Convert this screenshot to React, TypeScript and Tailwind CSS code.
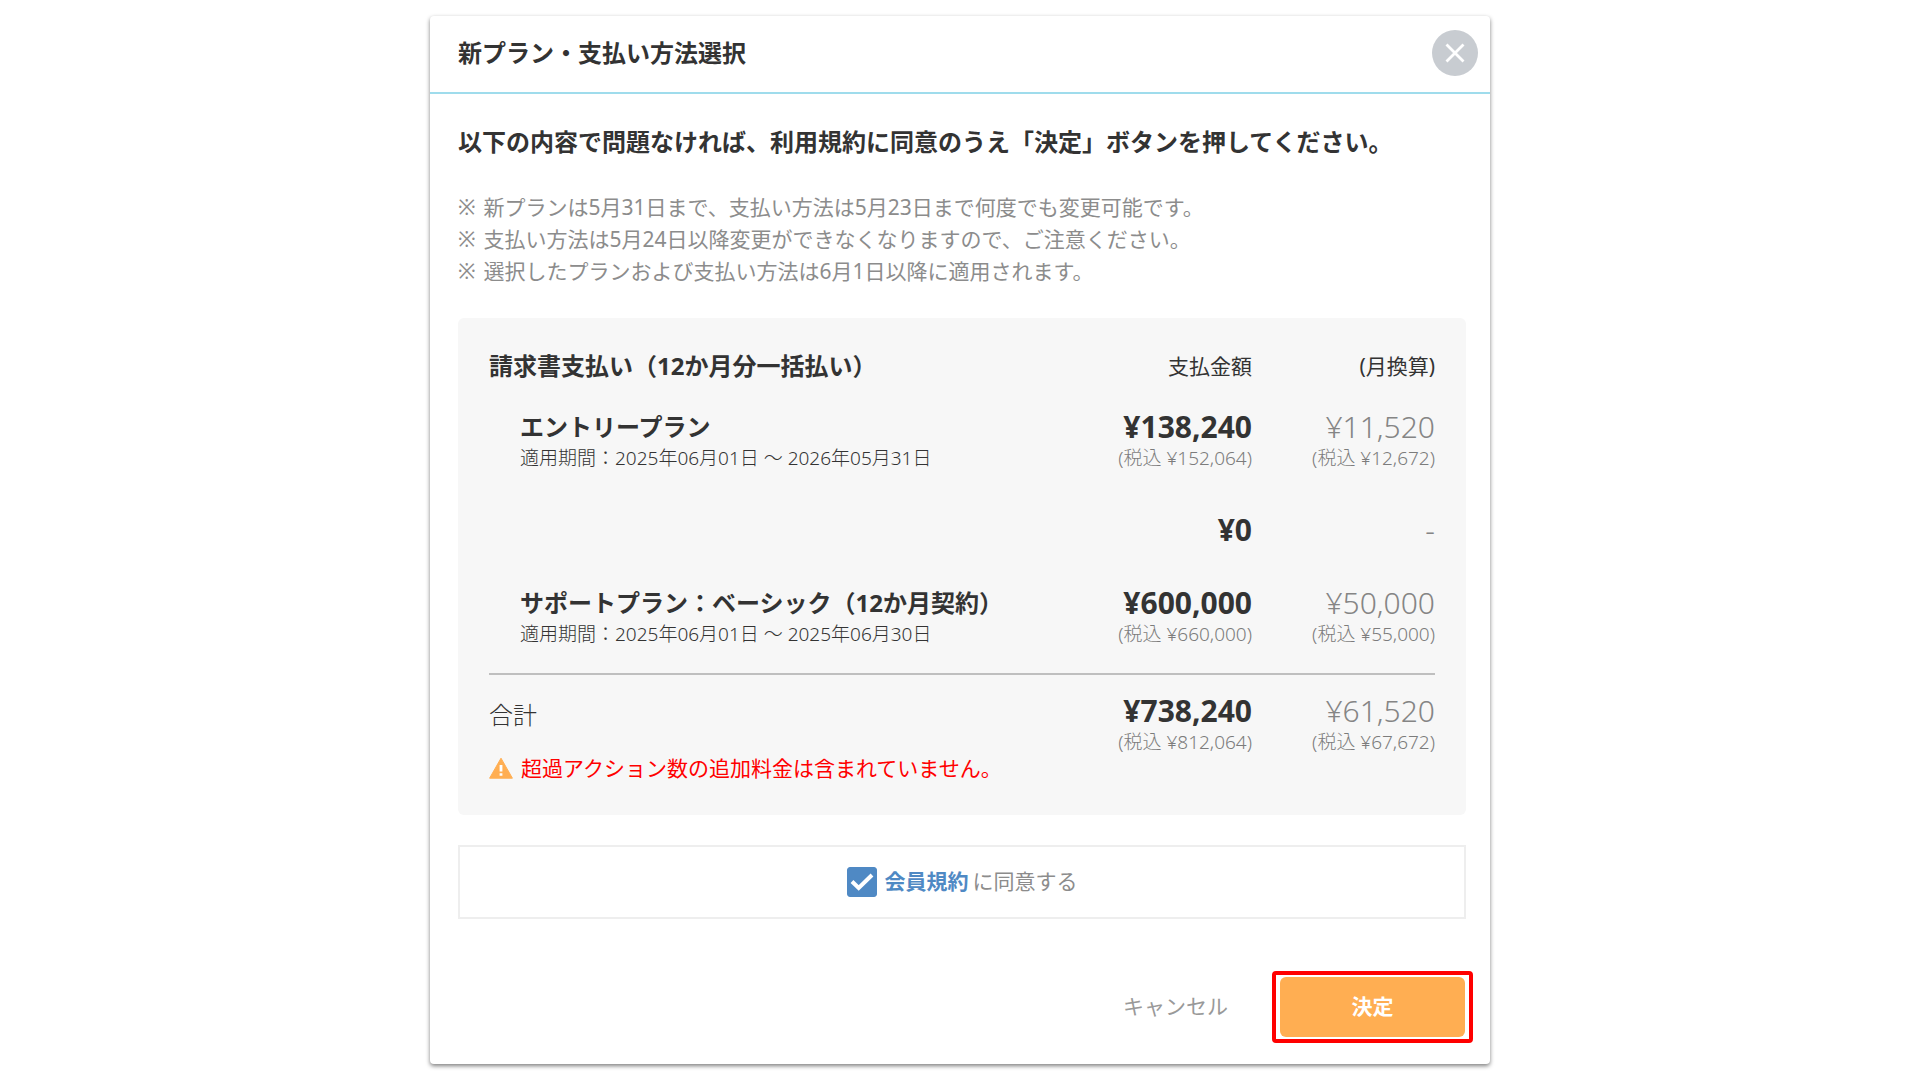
import { useState } from "react";

type PlanRow = {
  name?: string;
  period?: string;
  amount: string;
  amountTax?: string;
  monthly: string;
  monthlyTax?: string;
};

const notes = [
  "新プランは5月31日まで、支払い方法は5月23日まで何度でも変更可能です。",
  "支払い方法は5月24日以降変更ができなくなりますので、ご注意ください。",
  "選択したプランおよび支払い方法は6月1日以降に適用されます。",
];

const rows: PlanRow[] = [
  {
    name: "エントリープラン",
    period: "適用期間：2025年06月01日 〜 2026年05月31日",
    amount: "¥138,240",
    amountTax: "(税込 ¥152,064)",
    monthly: "¥11,520",
    monthlyTax: "(税込 ¥12,672)",
  },
  { amount: "¥0", monthly: "-" },
  {
    name: "サポートプラン：ベーシック（12か月契約）",
    period: "適用期間：2025年06月01日 〜 2025年06月30日",
    amount: "¥600,000",
    amountTax: "(税込 ¥660,000)",
    monthly: "¥50,000",
    monthlyTax: "(税込 ¥55,000)",
  },
];

function Price({ value, tax, strong }: { value: string; tax?: string; strong?: boolean }) {
  return (
    <>
      <div
        className={
          strong
            ? "text-[30px] leading-[32px] font-bold text-[#333]"
            : "text-[30px] leading-[32px] font-light text-[#858585]"
        }
      >
        {value}
      </div>
      {tax && <div className="text-[19px] leading-[30px] font-light text-[#7c7c7c]">{tax}</div>}
    </>
  );
}

function CloseIcon() {
  return (
    <svg viewBox="0 0 20 20" className="h-5 w-5" fill="none" stroke="currentColor" strokeWidth="2.8" aria-hidden="true">
      <path d="M1.5 1.5l17 17M18.5 1.5l-17 17" />
    </svg>
  );
}

function WarningIcon() {
  return (
    <svg viewBox="0 0 24 22" className="h-[22px] w-6 shrink-0" aria-hidden="true">
      <path d="M12 1.2L23.4 21.2H.6z" fill="#ffae52" stroke="#ffae52" strokeLinejoin="round" />
      <path d="M10.6 8h2.8v6.6h-2.8zM10.6 16.2h2.8v2.6h-2.8z" fill="#fff" />
    </svg>
  );
}

function PlanTable() {
  return (
    <table className="w-full border-collapse text-right">
      <thead>
        <tr className="leading-[36px]">
          <th className="text-left text-[24px] font-bold">請求書支払い（12か月分一括払い）</th>
          <th className="w-[180px] text-[21px] font-normal">支払金額</th>
          <th className="w-[183px] text-[21px] font-normal">(月換算)</th>
        </tr>
      </thead>
      <tbody className="before:block before:h-[27px]">
        {rows.map((row, i) => {
          const pad = i === rows.length - 1 ? "pb-6" : "pb-[41px]";
          return (
            <tr key={row.amount} className="align-top">
              <td className={`${pad} pl-[31px] text-left`}>
                <div className="text-[24px] leading-[32px] font-bold">{row.name}</div>
                <div className="text-[19px] leading-[30px] font-light">{row.period}</div>
              </td>
              <td className={pad}>
                <Price value={row.amount} tax={row.amountTax} strong />
              </td>
              <td className={pad}>
                <Price value={row.monthly} tax={row.monthlyTax} />
              </td>
            </tr>
          );
        })}
      </tbody>
      <tfoot>
        <tr className="border-t-2 border-[#bfbfbf] align-top">
          <th className="pt-6 text-left text-[24px] leading-[32px] font-light">合計</th>
          <td className="pt-5">
            <Price value="¥738,240" tax="(税込 ¥812,064)" strong />
          </td>
          <td className="pt-5">
            <Price value="¥61,520" tax="(税込 ¥67,672)" />
          </td>
        </tr>
      </tfoot>
    </table>
  );
}

export default function App() {
  const [agreed, setAgreed] = useState(true);

  return (
    <div className="min-h-screen bg-white py-4 font-['Noto_Sans','Noto_Sans_CJK_JP',sans-serif] text-[#333]">
      <main className="mx-auto w-full max-w-[1060px] rounded-sm bg-white shadow-[0_2px_4px_rgba(0,0,0,0.5)]">
        <header className="flex h-[78px] items-center justify-between border-b-2 border-[#9fdcec] pr-3 pb-0.5 pl-7">
          <h1 className="text-[24px] leading-[36px] font-bold">新プラン・支払い方法選択</h1>
          <button
            type="button"
            aria-label="閉じる"
            className="grid h-[46px] w-[46px] place-items-center rounded-full bg-[#c8ccd1] text-white"
          >
            <CloseIcon />
          </button>
        </header>

        <div className="pt-[30px] pr-6 pl-7">
          <p className="text-[24px] leading-[36px] font-bold">
            以下の内容で問題なければ、利用規約に同意のうえ「決定」ボタンを押してください。
          </p>
          <ul className="mt-[31px] text-[21px] leading-[32px] font-normal text-[#8c8c8c]">
            {notes.map((note) => (
              <li key={note} className="flex gap-2">
                <span>※</span>
                {note}
              </li>
            ))}
          </ul>

          <section className="mt-[31px] rounded-md bg-[#f7f7f7] px-[31px] pt-[30px] pb-[36px]">
            <PlanTable />
            <p className="flex items-center gap-2 text-[21px] leading-[22px] font-normal text-[#ff0000]">
              <WarningIcon />
              超過アクション数の追加料金は含まれていません。
            </p>
          </section>

          <div className="mt-[30px] flex h-[74px] items-center justify-center gap-2 border-2 border-[#eee] text-[21px]">
            <span className="grid h-[30px] w-[30px]">
              <input
                id="agree"
                type="checkbox"
                checked={agreed}
                onChange={(e) => setAgreed(e.target.checked)}
                className="col-start-1 row-start-1 h-full w-full appearance-none rounded-[3px] border border-[#4f89c4] checked:bg-[#4f89c4]"
              />
              {agreed && (
                <svg
                  viewBox="0 0 30 30"
                  className="pointer-events-none col-start-1 row-start-1 h-full w-full"
                  fill="none"
                  stroke="#fff"
                  strokeWidth="4"
                  aria-hidden="true"
                >
                  <path d="M5 14.5L11.7 21L25 8" />
                </svg>
              )}
            </span>
            <label htmlFor="agree" className="flex gap-1 font-normal text-[#8c8c8c]">
              <a href="#terms" className="font-bold text-[#4f89c4]">
                会員規約
              </a>
              に同意する
            </label>
          </div>
        </div>

        <footer className="mt-[52px] flex items-center justify-end gap-11 pr-[17px] pb-[21px]">
          <button type="button" className="text-[21px] font-normal text-[#999]">
            キャンセル
          </button>
          <div className="rounded-sm border-4 border-[#ff0000] px-1 py-0.5">
            <button
              type="button"
              className="h-[60px] w-[185px] rounded-md bg-[#ffae52] text-[21px] font-bold text-white"
            >
              決定
            </button>
          </div>
        </footer>
      </main>
    </div>
  );
}
